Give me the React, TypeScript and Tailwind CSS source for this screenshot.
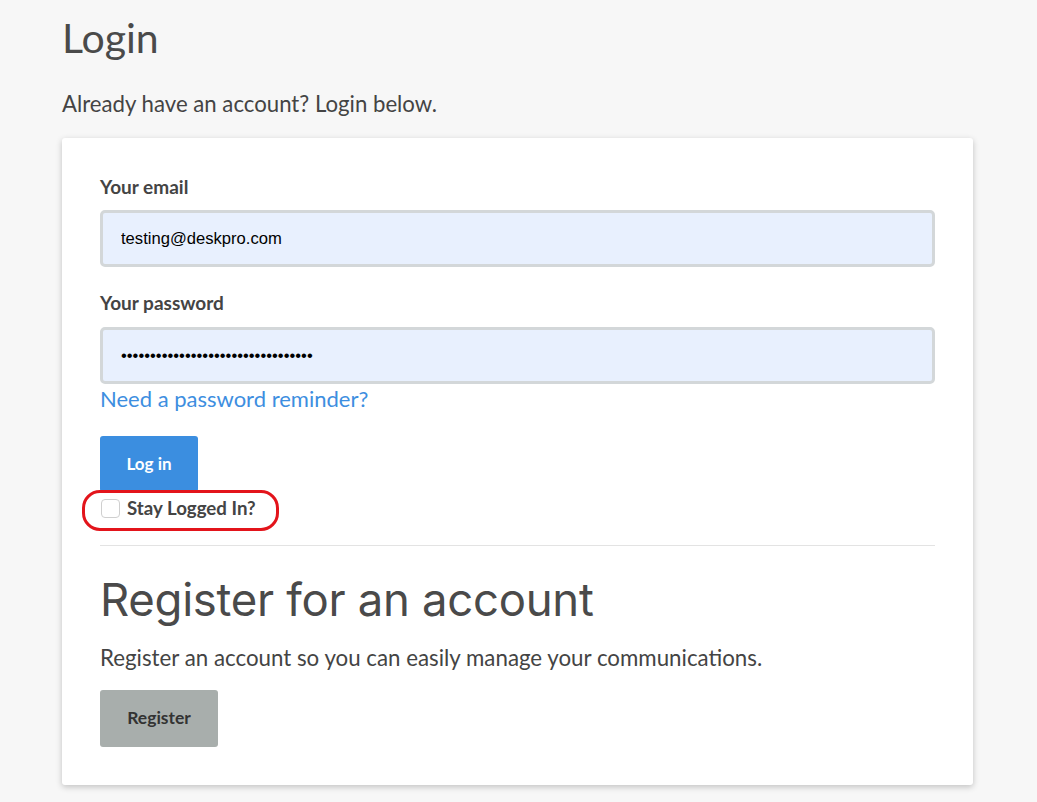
import { useState } from "react";

const LATO = "font-['Lato','Liberation_Sans',sans-serif]";

export default function App(): React.ReactElement {
  const [stay, setStay] = useState(false);
  return (
    <div className={`min-h-[802px] bg-[#f7f7f7] ${LATO} text-[#4a4a4a]`}>
      <div className="pl-[62px] pr-[64px] pt-[13px] pb-4">
        <h1 className="text-[41px] leading-[50px] font-normal text-[#4a4a4a]">Login</h1>
        <p className="mt-[26px] text-[22.2px] leading-[30px] text-[#444]">
          Already have an account? Login below.
        </p>

        <div className="mt-[19px] bg-white rounded-[3px] shadow-[0_2px_6px_rgba(0,0,0,0.22)] px-[38px] pt-[34px] pb-[38px]">
          <label className="block text-[19px] font-bold leading-[30px] text-[#444]">Your email</label>
          <input
            type="email"
            defaultValue="testing@deskpro.com"
            className="mt-[8px] block w-full h-[57px] rounded-[5px] border-[3px] border-[#d3d7d9] bg-[#e8f0fe] px-[18px] text-[16.6px] text-black font-['Liberation_Sans',sans-serif] outline-none"
          />

          <label className="mt-[21px] block text-[19px] font-bold leading-[30px] text-[#444]">Your password</label>
          <input
            type="password"
            defaultValue="testingtestingtestingtesting12345"
            className="mt-[9px] block w-full h-[57px] rounded-[5px] border-[3px] border-[#d3d7d9] bg-[#e8f0fe] px-[18px] text-[16.6px] text-black font-['Liberation_Sans',sans-serif] outline-none"
          />
          <a href="#" className="block text-[22px] leading-[30px] text-[#3d8ee0]">
            Need a password reminder?
          </a>

          <button
            type="button"
            className="mt-[22px] block h-[56px] w-[98px] rounded-[3px] bg-[#3b8ee0] text-white text-[17px] font-bold"
          >
            Log in
          </button>

          <div className="relative mt-[4px] flex items-center gap-[7px] pl-[1px]">
            <button
              type="button"
              onClick={() => setStay(!stay)}
              className="h-[19px] w-[19px] rounded-[4px] border border-[#cfcfcf] bg-white"
              aria-checked={stay}
            />
            <span className="text-[18.7px] font-bold leading-[24px] text-[#444]">Stay Logged In?</span>
            <span className="pointer-events-none absolute left-[-18px] top-[-6px] h-[41px] w-[197px] rounded-[18px] border-[3px] border-[#e3141b]" />
          </div>

          <hr className="mt-[25px] border-0 border-t border-[#e3e3e3]" />

          <h2 className="mt-[26px] text-[45.5px] leading-[56px] font-normal text-[#4a4a4a] font-['Inter','Liberation_Sans',sans-serif] tracking-[-0.3px]">
            Register for an account
          </h2>
          <p className="mt-[15px] text-[22.3px] leading-[30px] text-[#444]">
            Register an account so you can easily manage your communications.
          </p>
          <button
            type="button"
            className="mt-[17px] block h-[57px] w-[118px] rounded-[3px] bg-[#a8aeac] text-[#333] text-[17.5px] font-bold"
          >
            Register
          </button>
        </div>
      </div>
    </div>
  );
}
